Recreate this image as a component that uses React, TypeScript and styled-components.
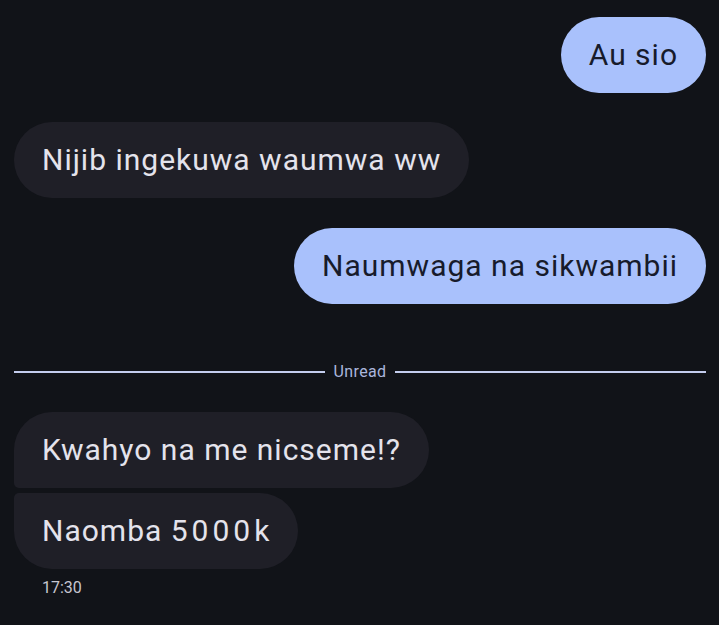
import React from "react";
import styled, { createGlobalStyle, css } from "styled-components";

const Global = createGlobalStyle`
  html, body {
    margin: 0;
    padding: 0;
    background: #111318;
  }
  body {
    font-family: Roboto, "Noto Sans", sans-serif;
  }
`;

const Thread = styled.div`
  display: flex;
  flex-direction: column;
  padding: 17px 13px 20px 14px;
  width: 719px;
  box-sizing: border-box;
  min-height: 625px;
`;

type Side = "out" | "in";
type Pos = "single" | "first" | "last";

const Row = styled.div<{ $side: Side; $gap: number }>`
  display: flex;
  justify-content: ${(p) => (p.$side === "out" ? "flex-end" : "flex-start")};
  margin-top: ${(p) => p.$gap}px;
`;

const Bubble = styled.div<{ $side: Side; $pos: Pos }>`
  box-sizing: border-box;
  height: 76px;
  padding: 20px 28px;
  font-size: 30px;
  line-height: 36px;
  letter-spacing: 1px;
  border-radius: 38px;
  white-space: nowrap;
  ${(p) =>
    p.$side === "out"
      ? css`
          background: #a9c1fc;
          color: #171b2b;
        `
      : css`
          background: #1f1f27;
          color: #e4e3ec;
        `}
  ${(p) =>
    p.$pos === "first" &&
    css`
      border-bottom-left-radius: 5px;
    `}
  ${(p) =>
    p.$pos === "last" &&
    css`
      border-top-left-radius: 5px;
    `}
`;

const Digits = styled.span`
  letter-spacing: 4px;
`;

const Divider = styled.div`
  display: flex;
  align-items: center;
  gap: 8px;
  margin-top: 58px;
  height: 20px;
`;

const Line = styled.div`
  flex: 1;
  height: 2px;
  background: #c4cdee;
`;

const DividerLabel = styled.span`
  font-size: 16px;
  line-height: 20px;
  letter-spacing: 0.4px;
  color: #aab6dc;
`;

const Time = styled.div`
  margin: 8px 0 0 28px;
  font-size: 16px;
  line-height: 22px;
  color: #c6c6d0;
`;

export default function App() {
  return (
    <>
      <Global />
      <Thread>
        <Row $side="out" $gap={0}>
          <Bubble $side="out" $pos="single">Au sio</Bubble>
        </Row>
        <Row $side="in" $gap={29}>
          <Bubble $side="in" $pos="single">Nijib ingekuwa waumwa ww</Bubble>
        </Row>
        <Row $side="out" $gap={30}>
          <Bubble $side="out" $pos="single">Naumwaga na sikwambii</Bubble>
        </Row>
        <Divider>
          <Line />
          <DividerLabel>Unread</DividerLabel>
          <Line />
        </Divider>
        <Row $side="in" $gap={30}>
          <Bubble $side="in" $pos="first">Kwahyo na me nicseme!?</Bubble>
        </Row>
        <Row $side="in" $gap={5}>
          <Bubble $side="in" $pos="last">
            Naomba <Digits>5000</Digits>k
          </Bubble>
        </Row>
        <Time>17:30</Time>
      </Thread>
    </>
  );
}
